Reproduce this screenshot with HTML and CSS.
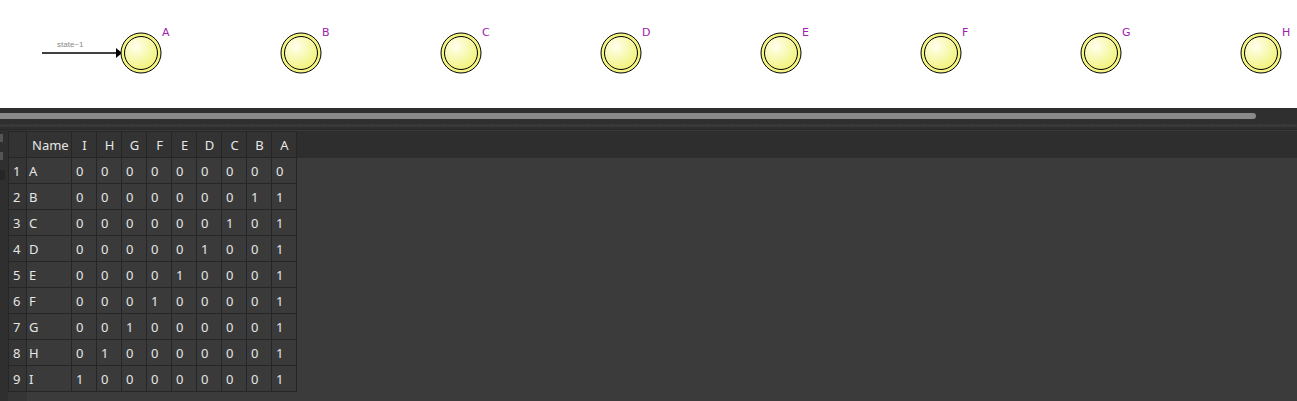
FILE: index.html
```html
<!DOCTYPE html>
<html>
<head>
<meta charset="utf-8">
<link rel="stylesheet" href="styles.css">
</head>
<body>
<div class="canvas">
<svg width="1297" height="108" viewBox="0 0 1297 108">
<defs>
<radialGradient id="g" cx="0.35" cy="0.3" r="0.75">
<stop offset="0" stop-color="#ffffee"/>
<stop offset="1" stop-color="#f2f27a"/>
</radialGradient>
</defs>
<text class="tlabel" x="57" y="47">state~1</text>
<line x1="42" y1="53" x2="116" y2="53" stroke="#000" stroke-width="1.5"/>
<polygon points="116,48 122,53 116,58" fill="#000"/>
<g class="node"><circle cx="141" cy="53" r="20" fill="#f4f480" stroke="#000" stroke-width="1"/><circle cx="141" cy="53" r="16.5" fill="url(#g)" stroke="#000" stroke-width="1"/><text x="162" y="36">A</text></g>
<g class="node"><circle cx="301" cy="53" r="20" fill="#f4f480" stroke="#000" stroke-width="1"/><circle cx="301" cy="53" r="16.5" fill="url(#g)" stroke="#000" stroke-width="1"/><text x="322" y="36">B</text></g>
<g class="node"><circle cx="461" cy="53" r="20" fill="#f4f480" stroke="#000" stroke-width="1"/><circle cx="461" cy="53" r="16.5" fill="url(#g)" stroke="#000" stroke-width="1"/><text x="482" y="36">C</text></g>
<g class="node"><circle cx="621" cy="53" r="20" fill="#f4f480" stroke="#000" stroke-width="1"/><circle cx="621" cy="53" r="16.5" fill="url(#g)" stroke="#000" stroke-width="1"/><text x="642" y="36">D</text></g>
<g class="node"><circle cx="781" cy="53" r="20" fill="#f4f480" stroke="#000" stroke-width="1"/><circle cx="781" cy="53" r="16.5" fill="url(#g)" stroke="#000" stroke-width="1"/><text x="802" y="36">E</text></g>
<g class="node"><circle cx="941" cy="53" r="20" fill="#f4f480" stroke="#000" stroke-width="1"/><circle cx="941" cy="53" r="16.5" fill="url(#g)" stroke="#000" stroke-width="1"/><text x="962" y="36">F</text></g>
<g class="node"><circle cx="1101" cy="53" r="20" fill="#f4f480" stroke="#000" stroke-width="1"/><circle cx="1101" cy="53" r="16.5" fill="url(#g)" stroke="#000" stroke-width="1"/><text x="1122" y="36">G</text></g>
<g class="node"><circle cx="1261" cy="53" r="20" fill="#f4f480" stroke="#000" stroke-width="1"/><circle cx="1261" cy="53" r="16.5" fill="url(#g)" stroke="#000" stroke-width="1"/><text x="1282" y="36">H</text></g>
</svg>
</div>
<div class="hbar">
<div class="thumb"></div>
<div class="dots"></div>
</div>
<div class="sheet">
<div class="strip"><span class="tab"></span><span class="tab"></span><span class="tab dark"></span></div>
<div class="tablewrap">
<div class="headband"></div>
<table class="grid">
<thead>
<tr><th class="rn"></th><th class="nm">Name</th><th>I</th><th>H</th><th>G</th><th>F</th><th>E</th><th>D</th><th>C</th><th>B</th><th>A</th></tr>
</thead>
<tbody>
<tr><td class="rn">1</td><td class="nm">A</td><td>0</td><td>0</td><td>0</td><td>0</td><td>0</td><td>0</td><td>0</td><td>0</td><td>0</td></tr>
<tr><td class="rn">2</td><td class="nm">B</td><td>0</td><td>0</td><td>0</td><td>0</td><td>0</td><td>0</td><td>0</td><td>1</td><td>1</td></tr>
<tr><td class="rn">3</td><td class="nm">C</td><td>0</td><td>0</td><td>0</td><td>0</td><td>0</td><td>0</td><td>1</td><td>0</td><td>1</td></tr>
<tr><td class="rn">4</td><td class="nm">D</td><td>0</td><td>0</td><td>0</td><td>0</td><td>0</td><td>1</td><td>0</td><td>0</td><td>1</td></tr>
<tr><td class="rn">5</td><td class="nm">E</td><td>0</td><td>0</td><td>0</td><td>0</td><td>1</td><td>0</td><td>0</td><td>0</td><td>1</td></tr>
<tr><td class="rn">6</td><td class="nm">F</td><td>0</td><td>0</td><td>0</td><td>1</td><td>0</td><td>0</td><td>0</td><td>0</td><td>1</td></tr>
<tr><td class="rn">7</td><td class="nm">G</td><td>0</td><td>0</td><td>1</td><td>0</td><td>0</td><td>0</td><td>0</td><td>0</td><td>1</td></tr>
<tr><td class="rn">8</td><td class="nm">H</td><td>0</td><td>1</td><td>0</td><td>0</td><td>0</td><td>0</td><td>0</td><td>0</td><td>1</td></tr>
<tr><td class="rn">9</td><td class="nm">I</td><td>1</td><td>0</td><td>0</td><td>0</td><td>0</td><td>0</td><td>0</td><td>0</td><td>1</td></tr>
</tbody>
</table>
</div>
</div>
</body>
</html>
```
FILE: styles.css
```css
html, body {
  margin: 0;
  padding: 0;
}
body {
  width: 1297px;
  height: 401px;
  overflow: hidden;
  background: #3a3a3a;
  font-family: "Noto Sans", "Open Sans", sans-serif;
}
.canvas {
  height: 108px;
  background: #ffffff;
}
.canvas svg {
  display: block;
}
.tlabel {
  font-family: "Liberation Sans", sans-serif;
  font-size: 8px;
  fill: #8a8a8a;
}
.node text {
  font-family: "DejaVu Sans", sans-serif;
  font-size: 11px;
  fill: #a020b0;
}
.hbar {
  height: 22px;
  background: #2f2f2f;
  display: flex;
  flex-direction: column;
  padding-top: 5px;
  box-sizing: border-box;
  border-bottom: 1px solid #262626;
}
.thumb {
  width: 1256px;
  height: 6px;
  background: #8a8a8a;
  border-radius: 0 3px 3px 0;
}
.dots {
  margin-top: 5px;
  height: 3px;
  background-image: radial-gradient(circle, #4a4a4a 0.8px, transparent 1px);
  background-size: 3px 3px;
  background-color: #353535;
}
.sheet {
  display: flex;
  height: 271px;
  background: #3a3a3a;
}
.strip {
  width: 8px;
  display: flex;
  flex-direction: column;
  padding-top: 4px;
  gap: 10px;
  background: #2f2f2f;
}
.tab {
  width: 3px;
  height: 8px;
  background: #555;
}
.tab.dark {
  width: 5px;
  height: 10px;
  background: #262626;
}
.tablewrap {
  flex: 1;
  position: relative;
  padding-top: 1px;
  background: linear-gradient(to right, #353535 0, #353535 19px, #3b3b3b 19px);
}
.headband {
  position: absolute;
  left: 0;
  right: 0;
  top: 1px;
  height: 27px;
  background: #2e2e2e;
}
.grid {
  position: relative;
  border-collapse: separate;
  border-spacing: 0;
  border-top: 1px solid #262626;
  border-left: 1px solid #262626;
  font-size: 13px;
  color: #e6e6e6;
  table-layout: fixed;
}
.grid th, .grid td {
  border-right: 1px solid #262626;
  border-bottom: 1px solid #262626;
  height: 26px;
  width: 25px;
  padding: 0 0 0 4px;
  text-align: left;
  box-sizing: border-box;
  font-weight: normal;
  white-space: nowrap;
}
.grid th {
  height: 26px;
  background: #333333;
  text-align: center;
  padding: 0 0 0 1px;
}
.grid td {
  background: #3a3a3a;
}
.grid .rn {
  width: 18px;
  background: #353535;
  padding-left: 4px;
}
.grid th.rn {
  background: #333333;
}
.grid .nm {
  width: 45px;
}
.grid th.nm {
  text-align: left;
  padding-left: 5px;
}
.grid td.nm {
  padding-left: 2px;
}
```
